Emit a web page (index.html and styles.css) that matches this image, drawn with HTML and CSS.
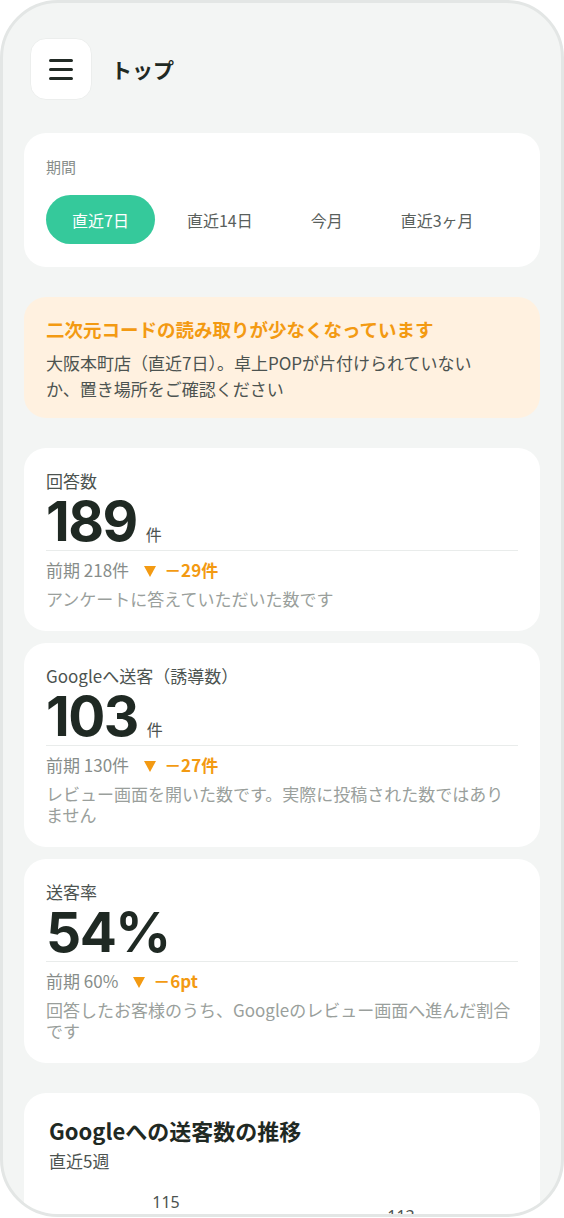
FILE: index.html
```html
<!DOCTYPE html>
<html lang="ja">
<head>
    <meta charset="UTF-8">
    <meta name="viewport" content="width=device-width, initial-scale=1.0">
    <title>トップ</title>
    <link rel="stylesheet" href="styles.css">
</head>
<body>
    <div class="device">
        <header class="topbar">
            <button class="menu-btn" aria-label="メニュー">
                <svg width="24" height="21" viewBox="0 0 24 21">
                    <path d="M1.5 1.5h21M1.5 10.5h21M1.5 19.5h21" stroke="#222b26" stroke-width="3" stroke-linecap="round" fill="none"/>
                </svg>
            </button>
            <h1 class="page-title">トップ</h1>
        </header>

        <main class="content">
            <section class="card period">
                <p class="period-label">期間</p>
                <div class="period-tabs">
                    <button class="tab active">直近7日</button>
                    <button class="tab">直近14日</button>
                    <button class="tab">今月</button>
                    <button class="tab">直近3ヶ月</button>
                </div>
            </section>

            <section class="alert">
                <h2 class="alert-title">二次元コードの読み取りが少なくなっています</h2>
                <p class="alert-text">大阪本町店（直近7日）。卓上POPが片付けられていないか、置き場所をご確認ください</p>
            </section>

            <div class="metrics">
                <section class="card metric">
                    <p class="metric-label">回答数</p>
                    <div class="metric-value">
                        <span class="num">189</span>
                        <span class="unit">件</span>
                    </div>
                    <div class="metric-prev">
                        <span>前期 218件</span>
                        <span class="down-arrow"></span>
                        <span class="diff">－29件</span>
                    </div>
                    <p class="metric-note">アンケートに答えていただいた数です</p>
                </section>

                <section class="card metric">
                    <p class="metric-label">Googleへ送客（誘導数）</p>
                    <div class="metric-value">
                        <span class="num">103</span>
                        <span class="unit">件</span>
                    </div>
                    <div class="metric-prev">
                        <span>前期 130件</span>
                        <span class="down-arrow"></span>
                        <span class="diff">－27件</span>
                    </div>
                    <p class="metric-note">レビュー画面を開いた数です。実際に投稿された数ではありません</p>
                </section>

                <section class="card metric">
                    <p class="metric-label">送客率</p>
                    <div class="metric-value">
                        <span class="num">54%</span>
                    </div>
                    <div class="metric-prev">
                        <span>前期 60%</span>
                        <span class="down-arrow"></span>
                        <span class="diff">－6pt</span>
                    </div>
                    <p class="metric-note">回答したお客様のうち、Googleのレビュー画面へ進んだ割合です</p>
                </section>
            </div>

            <section class="card chart-card">
                <h2 class="chart-title">Googleへの送客数の推移</h2>
                <p class="chart-sub">直近5週</p>
                <svg class="chart" width="472" height="200" viewBox="0 0 472 200">
                    <polyline points="4,150 120,40 237,110 355,53 468,116" fill="none" stroke="#35c99b" stroke-width="3"/>
                    <g fill="#35c99b">
                        <circle cx="4" cy="150" r="4"/>
                        <circle cx="120" cy="40" r="4"/>
                        <circle cx="237" cy="110" r="4"/>
                        <circle cx="355" cy="53" r="4"/>
                        <circle cx="468" cy="116" r="4"/>
                    </g>
                    <g class="chart-labels" text-anchor="middle">
                        <text x="14" y="136">98</text>
                        <text x="120" y="22">115</text>
                        <text x="237" y="96">104</text>
                        <text x="355" y="36">113</text>
                        <text x="458" y="102">103</text>
                    </g>
                </svg>
            </section>
        </main>
    </div>
</body>
</html>
```

FILE: styles.css
```css
:root {
    --bg: #f3f5f4;
    --frame: #e3e6e5;
    --text-dark: #1f2923;
    --text: #4c5350;
    --text-muted: #878d8a;
    --text-light: #9a9f9c;
    --green: #35c99b;
    --orange: #f39a12;
    --alert-bg: #fff1e0;
    --white: #ffffff;
}

* {
    margin: 0;
    padding: 0;
    box-sizing: border-box;
}

body {
    font-family: "Noto Sans CJK JP", "Noto Sans", sans-serif;
    color: var(--text);
    background: var(--white);
}

.device {
    width: 564px;
    height: 1217px;
    background: var(--bg);
    border: 3px solid var(--frame);
    border-radius: 58px;
    overflow: hidden;
}

/* header */
.topbar {
    display: flex;
    align-items: center;
    padding: 35px 27px 0;
    margin-bottom: 33px;
}

.menu-btn {
    width: 62px;
    height: 62px;
    background: var(--white);
    border: 1px solid #eceeed;
    border-radius: 16px;
    display: flex;
    align-items: center;
    justify-content: center;
}

.page-title {
    margin-left: 19px;
    font-size: 21px;
    font-weight: 700;
    color: var(--text-dark);
}

.content {
    display: flex;
    flex-direction: column;
    gap: 30px;
    padding: 0 21px;
}

.card {
    background: var(--white);
    border-radius: 22px;
}

/* period selector */
.period {
    padding: 22px 22px 23px;
}

.period-label {
    font-size: 15px;
    line-height: 24px;
    color: var(--text-muted);
}

.period-tabs {
    display: flex;
    gap: 6px;
    margin-top: 16px;
}

.tab {
    height: 49px;
    padding: 0 26px;
    border: none;
    border-radius: 25px;
    background: none;
    font-family: inherit;
    font-size: 16px;
    color: #59605c;
}

.tab.active {
    background: var(--green);
    color: var(--white);
}

/* alert */
.alert {
    background: var(--alert-bg);
    border-radius: 22px;
    padding: 19px 46px 16px 22px;
}

.alert-title {
    font-size: 18.5px;
    line-height: 26px;
    font-weight: 700;
    color: var(--orange);
    white-space: nowrap;
}

.alert-text {
    margin-top: 8px;
    font-size: 17px;
    line-height: 26px;
    color: var(--text);
}

/* metric cards */
.metrics {
    display: flex;
    flex-direction: column;
    gap: 12px;
}

.metric {
    padding: 20px 22px 22px;
}

.metric-label {
    font-size: 17px;
    line-height: 26px;
    color: var(--text);
}

.metric-value {
    display: flex;
    align-items: baseline;
    padding-bottom: 1px;
    border-bottom: 1px solid #e9eceb;
}

.metric-value .num {
    font-family: Inter, "Noto Sans", sans-serif;
    font-size: 55px;
    line-height: 55px;
    font-weight: 700;
    letter-spacing: -1.5px;
    color: var(--text-dark);
}

.metric-value .unit {
    margin-left: 9px;
    font-size: 16px;
    color: var(--text);
}

.metric-prev {
    display: flex;
    align-items: center;
    margin-top: 6px;
    font-size: 17px;
    line-height: 26px;
    color: var(--text-muted);
}

.down-arrow {
    width: 0;
    height: 0;
    margin: 2px 8px 0 15px;
    border-left: 6.5px solid transparent;
    border-right: 6.5px solid transparent;
    border-top: 11px solid var(--orange);
}

.diff {
    font-weight: 700;
    color: var(--orange);
}

.metric-note {
    margin-top: 5px;
    font-size: 17px;
    line-height: 21px;
    color: var(--text-light);
}

/* chart */
.chart-card {
    padding: 22px 24px 0 25px;
}

.chart-title {
    font-size: 22px;
    line-height: 31px;
    font-weight: 700;
    color: var(--text-dark);
}

.chart-sub {
    margin-top: 3px;
    font-size: 17px;
    line-height: 24px;
    color: var(--text);
}

.chart {
    display: block;
    margin: 13px 0 0 -3px;
}

.chart-labels {
    font-family: "Noto Sans", sans-serif;
    font-size: 16px;
    fill: var(--text);
}
```
